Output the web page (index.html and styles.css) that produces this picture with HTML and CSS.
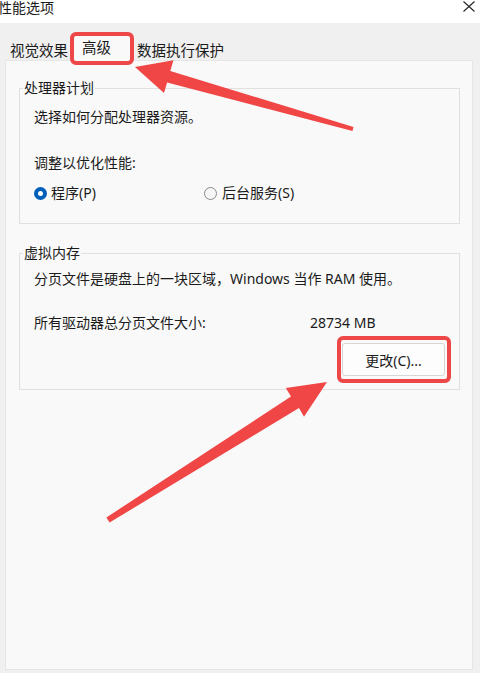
FILE: index.html
```html
<!DOCTYPE html>
<html lang="zh-CN">
<head>
<meta charset="utf-8">
<title>性能选项</title>
<link rel="stylesheet" href="styles.css">
</head>
<body>
<div class="window">
  <div class="titlebar">
    <span class="title">性能选项</span>
    <svg class="close" width="12" height="11" viewBox="0 0 12 11"><path d="M0.5 0.5 L11.5 10.5 M11.5 0.5 L0.5 10.5" stroke="#222" stroke-width="1.1" fill="none"/></svg>
  </div>
  <div class="tabs">
    <div class="tab tab-first">视觉效果</div>
    <div class="tab tab-active">高级</div>
    <div class="tab tab-last">数据执行保护</div>
  </div>
  <div class="panel">
    <fieldset class="group group-cpu">
      <legend>处理器计划</legend>
      <div class="line">选择如何分配处理器资源。</div>
      <div class="line line-gap">调整以优化性能:</div>
      <div class="radios">
        <label class="radio radio-first"><span class="dot dot-on"></span>程序(P)</label>
        <label class="radio"><span class="dot"></span>后台服务(S)</label>
      </div>
    </fieldset>
    <fieldset class="group group-mem">
      <legend>虚拟内存</legend>
      <div class="line">分页文件是硬盘上的一块区域，Windows 当作 RAM 使用。</div>
      <div class="size-row">
        <span class="size-label">所有驱动器总分页文件大小:</span>
        <span class="size-value">28734 MB</span>
      </div>
      <div class="btn-row">
        <span class="mark"><span class="btn">更改(C)...</span></span>
      </div>
    </fieldset>
  </div>
  <svg class="arrows" width="480" height="673" viewBox="0 0 480 673">
    <polygon fill="#f04646" points="135,67 173.4,60.2 170.3,71 353.5,127 352.5,131 167.1,82.4 164,93"/>
    <polygon fill="#f04646" points="327,382 304,416.7 299,408 109.6,522.5 106.4,517.5 291,396.5 285.8,387.9"/>
  </svg>
</div>
</body>
</html>
```

FILE: styles.css
```css
html, body {
  margin: 0;
  padding: 0;
}
body {
  width: 480px;
  height: 673px;
  overflow: hidden;
  background: #f0f0f0;
  font-family: "Noto Sans", "Noto Sans CJK SC", sans-serif;
  font-size: 14px;
  color: #1b1b1b;
}
.window {
  position: relative;
  width: 480px;
  height: 673px;
  display: flex;
  flex-direction: column;
}
.titlebar {
  height: 23px;
  background: #ffffff;
  display: flex;
  justify-content: space-between;
  align-items: flex-start;
}
.title {
  margin-left: -2px;
  line-height: 15px;
  font-size: 14px;
}
.close {
  margin: 1px 5px 0 0;
}
.tabs {
  height: 37px;
  display: flex;
  align-items: flex-end;
  padding-left: 5px;
  box-sizing: border-box;
}
.tab {
  box-sizing: border-box;
  height: 26px;
  padding-top: 6px;
  line-height: 20px;
  font-size: 14.5px;
  white-space: nowrap;
}
.tab-first {
  width: 65px;
  padding-left: 5px;
}
.tab-active {
  position: relative;
  z-index: 2;
  width: 64px;
  height: 33px;
  margin-bottom: -5px;
  border: 4px solid #ee4747;
  border-radius: 6px;
  background: #f9f9f9;
  padding: 1px 0 0 8px;
}
.tab-last {
  padding-left: 3px;
}
.panel {
  box-sizing: border-box;
  margin: 0 7px 0 5px;
  height: 610px;
  background: #f9f9f9;
  border: 1px solid #e6e6e6;
  padding: 17px 12px 0 13px;
}
.group {
  margin: 0;
  border: 1px solid #e0e0e0;
  padding: 9px 8px 20px 14px;
  min-width: 0;
}
.group legend {
  margin-left: -11px;
  padding: 0 1px;
  line-height: 20px;
  font-size: 14px;
}
.group-mem {
  margin-top: 19px;
  padding: 6px 8px 6px 14px;
}
.line {
  line-height: 20px;
  white-space: nowrap;
}
.line-gap {
  margin-top: 26px;
}
.radios {
  display: flex;
  margin-top: 10px;
  line-height: 20px;
}
.radio {
  display: flex;
  align-items: center;
}
.radio-first {
  width: 170px;
}
.dot {
  box-sizing: border-box;
  width: 13px;
  height: 13px;
  border-radius: 50%;
  border: 1px solid #8a8a8a;
  background: #f6f6f6;
  margin-right: 5px;
}
.dot-on {
  border: 4px solid #005fb8;
  background: #ffffff;
  margin-right: 4px;
}
.size-row {
  display: flex;
  margin-top: 24px;
  line-height: 20px;
}
.size-label {
  width: 276px;
}
.btn-row {
  display: flex;
  justify-content: flex-end;
  margin-top: 3px;
}
.mark {
  display: inline-flex;
  border: 4px solid #ee4747;
  border-radius: 6px;
  padding: 3px 2px 3px 1px;
}
.btn {
  box-sizing: border-box;
  width: 103px;
  height: 33px;
  display: flex;
  align-items: center;
  justify-content: center;
  background: #fdfdfd;
  border: 1px solid #d6d6d6;
  border-radius: 3px;
  font-size: 14px;
}
.arrows {
  position: absolute;
  left: 0;
  top: 0;
  z-index: 5;
  pointer-events: none;
}
```
